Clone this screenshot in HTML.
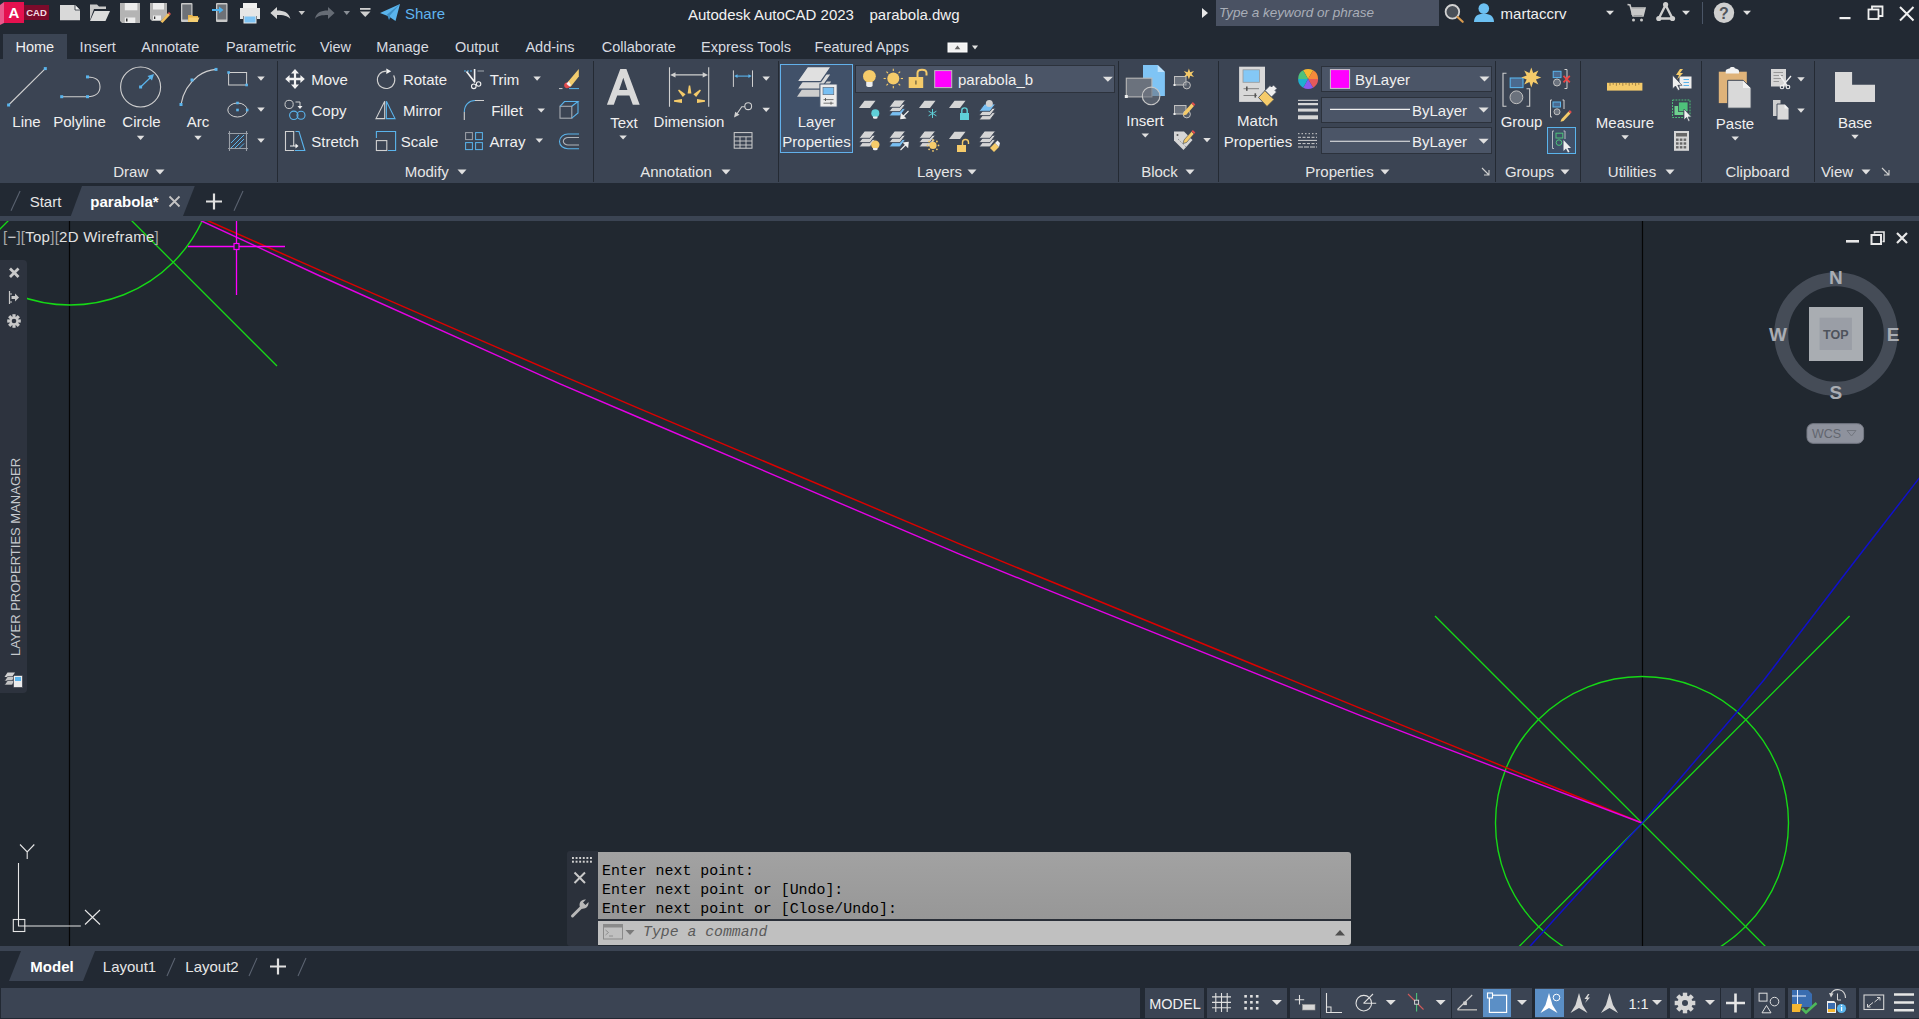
<!DOCTYPE html>
<html><head><meta charset="utf-8"><style>
html,body{margin:0;padding:0;width:1919px;height:1019px;overflow:hidden;background:#222933;}
.t{position:absolute;white-space:nowrap;line-height:20px;height:20px;font-family:"Liberation Sans",sans-serif;}
.r{position:absolute;}
svg.ov{position:absolute;left:0;top:0;}
</style></head><body>
<div class="r" style="left:0px;top:0px;width:1919px;height:34px;background:#222933;"></div>
<div class="r" style="left:0px;top:59px;width:1919px;height:124px;background:#3b4453;"></div>
<div class="r" style="left:3px;top:34px;width:64px;height:25px;background:#3b4453;"></div>
<div class="r" style="left:0px;top:183px;width:1919px;height:33px;background:#222933;"></div>
<div class="r" style="left:0px;top:216px;width:1919px;height:5px;background:#3b4453;"></div>
<div class="r" style="left:0px;top:221px;width:1919px;height:725px;background:#212830;"></div>
<div class="r" style="left:0px;top:946px;width:1919px;height:5px;background:#3b4453;"></div>
<div class="r" style="left:0px;top:951px;width:1919px;height:37px;background:#222933;"></div>
<div class="r" style="left:0px;top:988px;width:1919px;height:31px;background:#222933;"></div>
<div class="r" style="left:1px;top:988px;width:1139px;height:30px;background:#3b4453;"></div>
<div class="r" style="left:1145px;top:988px;width:59px;height:30px;background:#3b4453;"></div>
<div class="r" style="left:1207px;top:988px;width:80px;height:30px;background:#3b4453;"></div>
<div class="r" style="left:1290px;top:988px;width:30px;height:30px;background:#3b4453;"></div>
<div class="r" style="left:1321px;top:988px;width:130px;height:30px;background:#3b4453;"></div>
<div class="r" style="left:1452px;top:988px;width:80px;height:30px;background:#3b4453;"></div>
<div class="r" style="left:1535px;top:988px;width:132px;height:30px;background:#3b4453;"></div>
<div class="r" style="left:1670px;top:988px;width:50px;height:30px;background:#3b4453;"></div>
<div class="r" style="left:1721px;top:988px;width:30px;height:30px;background:#3b4453;"></div>
<div class="r" style="left:1754px;top:988px;width:31px;height:30px;background:#3b4453;"></div>
<div class="r" style="left:1788px;top:988px;width:68px;height:30px;background:#3b4453;"></div>
<div class="r" style="left:1859px;top:988px;width:60px;height:30px;background:#3b4453;"></div>
<svg class="ov" width="1919" height="1019" viewBox="0 0 1919 1019">
<polygon points="70.8,216 82,186 194.8,186 183,216" fill="#3b4453"/>
<defs><clipPath id="vpc"><rect x="0" y="221" width="1919" height="725"/></clipPath></defs>
<g clip-path="url(#vpc)">
<path d="M69.5,221 V946 M1642.5,221 V946" stroke="#050505" stroke-width="1.2"/>
<circle cx="70" cy="159" r="146" fill="none" stroke="#16d816" stroke-width="1.4"/>
<path d="M70,159 L277,366 M70,159 L-20,249" stroke="#16d816" stroke-width="1.35"/>
<circle cx="1642" cy="823" r="146.5" fill="none" stroke="#16d816" stroke-width="1.4"/>
<path d="M1435,616 L1800,981 M1849.6,616 L1484.6,981" stroke="#16d816" stroke-width="1.35"/>
<polyline points="200,217.2 208.6,221 320,270.4 560,374.7 640,408.8 960,544.1 1040,577 1360,708.2 1440,740.6 1642,823" fill="none" stroke="#dc0000" stroke-width="1.45" stroke-linejoin="round"/>
<polyline points="194,217.3 201.7,221 320,276 560,383.8 640,418 960,554.4 1040,586.8 1360,715.3 1440,746.2 1642,823" fill="none" stroke="#e600e6" stroke-width="1.4" stroke-linejoin="round"/>
<polyline points="1500,979 1530.7,945.5 1642,823 1737,712 1763.9,680 1849.6,568 1919,478.4 1930,464" fill="none" stroke="#1010cc" stroke-width="1.5" stroke-linejoin="round"/>
<path d="M188,246.5 H285 M236.5,221 V295" stroke="#ff00ff" stroke-width="1.3"/><rect x="234" y="243.5" width="5" height="6" fill="#212830" stroke="#ff00ff" stroke-width="1.2"/>
<path d="M18.5,863 V926 H80.8" fill="none" stroke="#e6e6e6" stroke-width="1.1"/><rect x="13.3" y="919.5" width="11.5" height="12" fill="none" stroke="#e6e6e6" stroke-width="1.1"/>
<path d="M20,844.5 L27.2,852 L34.3,844.5 M27.2,852 V859" fill="none" stroke="#e6e6e6" stroke-width="1.1"/><path d="M85,910 L100,924.5 M100,910 L85,924.5" stroke="#e6e6e6" stroke-width="1.1"/>
</g>
<polygon points="9,981 21,951 95,951 83,981" fill="#3b4453"/>
</svg>
<div class="t" style="left:688px;top:4.5px;width:163px;font-size:15px;color:#f2f2f2;font-weight:normal;text-align:center;font-family:'Liberation Sans', sans-serif;font-style:normal;">Autodesk AutoCAD 2023</div>
<div class="t" style="left:869px;top:4.5px;width:91px;font-size:15px;color:#f2f2f2;font-weight:normal;text-align:center;font-family:'Liberation Sans', sans-serif;font-style:normal;">parabola.dwg</div>
<div class="t" style="left:405px;top:3.5px;width:38px;font-size:15px;color:#5fb4f0;font-weight:normal;text-align:center;font-family:'Liberation Sans', sans-serif;font-style:normal;">Share</div>
<div class="r" style="left:1216px;top:0px;width:223px;height:26px;background:#4a5263;"></div>
<div class="t" style="left:1219px;top:3.0px;width:153px;font-size:13.5px;color:#a9aeb8;font-weight:normal;text-align:left;font-family:'Liberation Sans', sans-serif;font-style:italic;">Type a keyword or phrase</div>
<div class="t" style="left:1500px;top:4.0px;width:67px;font-size:15px;color:#f0f0f0;font-weight:normal;text-align:center;font-family:'Liberation Sans', sans-serif;font-style:normal;">martaccrv</div>
<div class="t" style="left:9.7px;top:36.5px;width:50.3px;font-size:14.5px;color:#f0f0f0;font-weight:normal;text-align:center;font-family:'Liberation Sans', sans-serif;font-style:normal;">Home</div>
<div class="t" style="left:75px;top:36.5px;width:45.5px;font-size:14.5px;color:#d8dbe0;font-weight:normal;text-align:center;font-family:'Liberation Sans', sans-serif;font-style:normal;">Insert</div>
<div class="t" style="left:135px;top:36.5px;width:70.5px;font-size:14.5px;color:#d8dbe0;font-weight:normal;text-align:center;font-family:'Liberation Sans', sans-serif;font-style:normal;">Annotate</div>
<div class="t" style="left:221px;top:36.5px;width:80px;font-size:14.5px;color:#d8dbe0;font-weight:normal;text-align:center;font-family:'Liberation Sans', sans-serif;font-style:normal;">Parametric</div>
<div class="t" style="left:315px;top:36.5px;width:41px;font-size:14.5px;color:#d8dbe0;font-weight:normal;text-align:center;font-family:'Liberation Sans', sans-serif;font-style:normal;">View</div>
<div class="t" style="left:371px;top:36.5px;width:63px;font-size:14.5px;color:#d8dbe0;font-weight:normal;text-align:center;font-family:'Liberation Sans', sans-serif;font-style:normal;">Manage</div>
<div class="t" style="left:449px;top:36.5px;width:55.5px;font-size:14.5px;color:#d8dbe0;font-weight:normal;text-align:center;font-family:'Liberation Sans', sans-serif;font-style:normal;">Output</div>
<div class="t" style="left:519px;top:36.5px;width:62px;font-size:14.5px;color:#d8dbe0;font-weight:normal;text-align:center;font-family:'Liberation Sans', sans-serif;font-style:normal;">Add-ins</div>
<div class="t" style="left:595px;top:36.5px;width:87.5px;font-size:14.5px;color:#d8dbe0;font-weight:normal;text-align:center;font-family:'Liberation Sans', sans-serif;font-style:normal;">Collaborate</div>
<div class="t" style="left:697.5px;top:36.5px;width:97.0px;font-size:14.5px;color:#d8dbe0;font-weight:normal;text-align:center;font-family:'Liberation Sans', sans-serif;font-style:normal;">Express Tools</div>
<div class="t" style="left:809px;top:36.5px;width:105.5px;font-size:14.5px;color:#d8dbe0;font-weight:normal;text-align:center;font-family:'Liberation Sans', sans-serif;font-style:normal;">Featured Apps</div>
<div class="t" style="left:108.8px;top:161.5px;width:43.89999999999999px;font-size:15px;color:#e6e6e6;font-weight:normal;text-align:center;font-family:'Liberation Sans', sans-serif;font-style:normal;">Draw</div>
<div class="t" style="left:398.5px;top:161.5px;width:56.5px;font-size:15px;color:#e6e6e6;font-weight:normal;text-align:center;font-family:'Liberation Sans', sans-serif;font-style:normal;">Modify</div>
<div class="t" style="left:634px;top:161.5px;width:84px;font-size:15px;color:#e6e6e6;font-weight:normal;text-align:center;font-family:'Liberation Sans', sans-serif;font-style:normal;">Annotation</div>
<div class="t" style="left:914px;top:161.5px;width:51px;font-size:15px;color:#e6e6e6;font-weight:normal;text-align:center;font-family:'Liberation Sans', sans-serif;font-style:normal;">Layers</div>
<div class="t" style="left:1136px;top:161.5px;width:47px;font-size:15px;color:#e6e6e6;font-weight:normal;text-align:center;font-family:'Liberation Sans', sans-serif;font-style:normal;">Block</div>
<div class="t" style="left:1301px;top:161.5px;width:77px;font-size:15px;color:#e6e6e6;font-weight:normal;text-align:center;font-family:'Liberation Sans', sans-serif;font-style:normal;">Properties</div>
<div class="t" style="left:1501px;top:161.5px;width:57px;font-size:15px;color:#e6e6e6;font-weight:normal;text-align:center;font-family:'Liberation Sans', sans-serif;font-style:normal;">Groups</div>
<div class="t" style="left:1602px;top:161.5px;width:60px;font-size:15px;color:#e6e6e6;font-weight:normal;text-align:center;font-family:'Liberation Sans', sans-serif;font-style:normal;">Utilities</div>
<div class="t" style="left:1720px;top:161.5px;width:75px;font-size:15px;color:#e6e6e6;font-weight:normal;text-align:center;font-family:'Liberation Sans', sans-serif;font-style:normal;">Clipboard</div>
<div class="t" style="left:1816px;top:161.5px;width:42px;font-size:15px;color:#e6e6e6;font-weight:normal;text-align:center;font-family:'Liberation Sans', sans-serif;font-style:normal;">View</div>
<div class="r" style="left:277px;top:61px;width:1px;height:121px;background:#242a33;"></div>
<div class="r" style="left:593px;top:61px;width:1px;height:121px;background:#242a33;"></div>
<div class="r" style="left:778px;top:61px;width:1px;height:121px;background:#242a33;"></div>
<div class="r" style="left:1118px;top:61px;width:1px;height:121px;background:#242a33;"></div>
<div class="r" style="left:1218px;top:61px;width:1px;height:121px;background:#242a33;"></div>
<div class="r" style="left:1495px;top:61px;width:1px;height:121px;background:#242a33;"></div>
<div class="r" style="left:1580px;top:61px;width:1px;height:121px;background:#242a33;"></div>
<div class="r" style="left:1701px;top:61px;width:1px;height:121px;background:#242a33;"></div>
<div class="r" style="left:1814px;top:61px;width:1px;height:121px;background:#242a33;"></div>
<div class="t" style="left:9px;top:111.5px;width:35px;font-size:15px;color:#f0f0f0;font-weight:normal;text-align:center;font-family:'Liberation Sans', sans-serif;font-style:normal;">Line</div>
<div class="t" style="left:50px;top:111.5px;width:59px;font-size:15px;color:#f0f0f0;font-weight:normal;text-align:center;font-family:'Liberation Sans', sans-serif;font-style:normal;">Polyline</div>
<div class="t" style="left:118px;top:112.0px;width:47px;font-size:15px;color:#f0f0f0;font-weight:normal;text-align:center;font-family:'Liberation Sans', sans-serif;font-style:normal;">Circle</div>
<div class="t" style="left:182px;top:112.0px;width:32px;font-size:15px;color:#f0f0f0;font-weight:normal;text-align:center;font-family:'Liberation Sans', sans-serif;font-style:normal;">Arc</div>
<div class="t" style="left:306px;top:69.5px;width:47px;font-size:15px;color:#f0f0f0;font-weight:normal;text-align:center;font-family:'Liberation Sans', sans-serif;font-style:normal;">Move</div>
<div class="t" style="left:307px;top:100.5px;width:44px;font-size:15px;color:#f0f0f0;font-weight:normal;text-align:center;font-family:'Liberation Sans', sans-serif;font-style:normal;">Copy</div>
<div class="t" style="left:307px;top:131.5px;width:56px;font-size:15px;color:#f0f0f0;font-weight:normal;text-align:center;font-family:'Liberation Sans', sans-serif;font-style:normal;">Stretch</div>
<div class="t" style="left:398px;top:69.5px;width:54px;font-size:15px;color:#f0f0f0;font-weight:normal;text-align:center;font-family:'Liberation Sans', sans-serif;font-style:normal;">Rotate</div>
<div class="t" style="left:397px;top:100.5px;width:51px;font-size:15px;color:#f0f0f0;font-weight:normal;text-align:center;font-family:'Liberation Sans', sans-serif;font-style:normal;">Mirror</div>
<div class="t" style="left:397px;top:131.5px;width:45px;font-size:15px;color:#f0f0f0;font-weight:normal;text-align:center;font-family:'Liberation Sans', sans-serif;font-style:normal;">Scale</div>
<div class="t" style="left:485px;top:69.5px;width:39px;font-size:15px;color:#f0f0f0;font-weight:normal;text-align:center;font-family:'Liberation Sans', sans-serif;font-style:normal;">Trim</div>
<div class="t" style="left:486px;top:100.5px;width:42px;font-size:15px;color:#f0f0f0;font-weight:normal;text-align:center;font-family:'Liberation Sans', sans-serif;font-style:normal;">Fillet</div>
<div class="t" style="left:485px;top:131.5px;width:45px;font-size:15px;color:#f0f0f0;font-weight:normal;text-align:center;font-family:'Liberation Sans', sans-serif;font-style:normal;">Array</div>
<div class="t" style="left:604px;top:112.5px;width:40px;font-size:15px;color:#f0f0f0;font-weight:normal;text-align:center;font-family:'Liberation Sans', sans-serif;font-style:normal;">Text</div>
<div class="t" style="left:649px;top:111.8px;width:80px;font-size:15px;color:#f0f0f0;font-weight:normal;text-align:center;font-family:'Liberation Sans', sans-serif;font-style:normal;">Dimension</div>
<div class="r" style="left:780px;top:64px;width:73px;height:89px;background:#415169;border:1px solid #62b0ea;box-sizing:border-box"></div>
<div class="t" style="left:794px;top:112.2px;width:45px;font-size:15px;color:#f0f0f0;font-weight:normal;text-align:center;font-family:'Liberation Sans', sans-serif;font-style:normal;">Layer</div>
<div class="t" style="left:779px;top:131.8px;width:75px;font-size:15px;color:#f0f0f0;font-weight:normal;text-align:center;font-family:'Liberation Sans', sans-serif;font-style:normal;">Properties</div>
<div class="r" style="left:855px;top:65px;width:260px;height:28px;background:#4b5567;border:1px solid #2c323c;box-sizing:border-box"></div>
<div class="t" style="left:958px;top:69.5px;width:75px;font-size:15px;color:#f0f0f0;font-weight:normal;text-align:left;font-family:'Liberation Sans', sans-serif;font-style:normal;">parabola_b</div>
<div class="t" style="left:1123px;top:111.0px;width:44px;font-size:15px;color:#f0f0f0;font-weight:normal;text-align:center;font-family:'Liberation Sans', sans-serif;font-style:normal;">Insert</div>
<div class="t" style="left:1232px;top:111.4px;width:51px;font-size:15px;color:#f0f0f0;font-weight:normal;text-align:center;font-family:'Liberation Sans', sans-serif;font-style:normal;">Match</div>
<div class="t" style="left:1220px;top:131.7px;width:76px;font-size:15px;color:#f0f0f0;font-weight:normal;text-align:center;font-family:'Liberation Sans', sans-serif;font-style:normal;">Properties</div>
<div class="r" style="left:1321px;top:65.5px;width:171px;height:26.900000000000006px;background:#4b5567;border:1px solid #2c323c;box-sizing:border-box"></div>
<div class="r" style="left:1321px;top:96.5px;width:171px;height:26.799999999999997px;background:#4b5567;border:1px solid #2c323c;box-sizing:border-box"></div>
<div class="r" style="left:1321px;top:127.4px;width:171px;height:27.099999999999994px;background:#4b5567;border:1px solid #2c323c;box-sizing:border-box"></div>
<div class="t" style="left:1355px;top:70.0px;width:65px;font-size:15px;color:#f0f0f0;font-weight:normal;text-align:left;font-family:'Liberation Sans', sans-serif;font-style:normal;">ByLayer</div>
<div class="t" style="left:1412px;top:100.7px;width:58px;font-size:15px;color:#f0f0f0;font-weight:normal;text-align:left;font-family:'Liberation Sans', sans-serif;font-style:normal;">ByLayer</div>
<div class="t" style="left:1412px;top:131.8px;width:58px;font-size:15px;color:#f0f0f0;font-weight:normal;text-align:left;font-family:'Liberation Sans', sans-serif;font-style:normal;">ByLayer</div>
<div class="t" style="left:1496px;top:111.8px;width:51px;font-size:15px;color:#f0f0f0;font-weight:normal;text-align:center;font-family:'Liberation Sans', sans-serif;font-style:normal;">Group</div>
<div class="r" style="left:1547px;top:127px;width:29px;height:27px;background:#405068;border:1px solid #5ab4ec;box-sizing:border-box"></div>
<div class="t" style="left:1592px;top:113.0px;width:66px;font-size:15px;color:#f0f0f0;font-weight:normal;text-align:center;font-family:'Liberation Sans', sans-serif;font-style:normal;">Measure</div>
<div class="t" style="left:1714px;top:113.6px;width:42px;font-size:15px;color:#f0f0f0;font-weight:normal;text-align:center;font-family:'Liberation Sans', sans-serif;font-style:normal;">Paste</div>
<div class="t" style="left:1834px;top:113.1px;width:42px;font-size:15px;color:#f0f0f0;font-weight:normal;text-align:center;font-family:'Liberation Sans', sans-serif;font-style:normal;">Base</div>
<div class="t" style="left:26px;top:191.5px;width:39px;font-size:15px;color:#e6e6e6;font-weight:normal;text-align:center;font-family:'Liberation Sans', sans-serif;font-style:normal;">Start</div>
<div class="t" style="left:88px;top:191.5px;width:73px;font-size:15px;color:#ffffff;font-weight:bold;text-align:center;font-family:'Liberation Sans', sans-serif;font-style:normal;">parabola*</div>
<div class="t" style="left:3px;top:227.0px;width:157px;font-size:15px;color:#e2e2e2;font-weight:normal;text-align:left;font-family:'Liberation Sans', sans-serif;font-style:normal;letter-spacing:0.25px"><span style="color:#a8a8a8">[</span>−<span style="color:#a8a8a8">]</span><span style="color:#a8a8a8">[</span>Top<span style="color:#a8a8a8">]</span><span style="color:#a8a8a8">[</span>2D Wireframe<span style="color:#a8a8a8">]</span></div>
<div class="r" style="left:0px;top:260px;width:27px;height:433px;background:#2d333e;border-radius:0 4px 4px 0"></div>
<div class="t" style="left:16px;top:557px;width:0;height:0;"><div style="position:absolute;left:-101px;top:-8px;width:202px;height:16px;line-height:16px;font-size:13px;color:#c6c9ce;text-align:center;transform:rotate(-90deg);font-family:'Liberation Sans',sans-serif;">LAYER PROPERTIES MANAGER</div></div>
<div class="r" style="left:567px;top:851px;width:31px;height:95px;background:#2b313b;border-radius:3px 0 0 3px"></div>
<div class="r" style="left:598px;top:852px;width:753px;height:67px;background:linear-gradient(#a2a2a2,#979797);border-radius:0 3px 0 0"></div>
<div class="r" style="left:598px;top:919px;width:753px;height:1.5px;background:#2a2f38;"></div>
<div class="r" style="left:598px;top:920.5px;width:753px;height:24.5px;background:#c0c0c0;border-radius:0 0 3px 0"></div>
<div class="t" style="left:602px;top:861.0px;width:398px;font-size:14.9px;color:#000000;font-weight:normal;text-align:left;font-family:'Liberation Mono', monospace;font-style:normal;">Enter next point:</div>
<div class="t" style="left:602px;top:880.0px;width:398px;font-size:14.9px;color:#000000;font-weight:normal;text-align:left;font-family:'Liberation Mono', monospace;font-style:normal;">Enter next point or [Undo]:</div>
<div class="t" style="left:602px;top:899.0px;width:398px;font-size:14.9px;color:#000000;font-weight:normal;text-align:left;font-family:'Liberation Mono', monospace;font-style:normal;">Enter next point or [Close/Undo]:</div>
<div class="t" style="left:643px;top:922.0px;width:137px;font-size:14.8px;color:#5a5a5a;font-weight:normal;text-align:left;font-family:'Liberation Mono', monospace;font-style:italic;">Type a command</div>
<div class="t" style="left:26px;top:956.5px;width:52px;font-size:15px;color:#ffffff;font-weight:bold;text-align:center;font-family:'Liberation Sans', sans-serif;font-style:normal;">Model</div>
<div class="t" style="left:100px;top:956.5px;width:59px;font-size:15px;color:#e6e6e6;font-weight:normal;text-align:center;font-family:'Liberation Sans', sans-serif;font-style:normal;">Layout1</div>
<div class="t" style="left:182px;top:956.5px;width:60px;font-size:15px;color:#e6e6e6;font-weight:normal;text-align:center;font-family:'Liberation Sans', sans-serif;font-style:normal;">Layout2</div>
<div class="t" style="left:1148px;top:993.5px;width:54px;font-size:14.5px;color:#f0f0f0;font-weight:normal;text-align:center;font-family:'Liberation Sans', sans-serif;font-style:normal;">MODEL</div>
<div class="r" style="left:1483px;top:988.5px;width:28px;height:28.5px;background:#5b8fc6;"></div>
<div class="r" style="left:1535px;top:988.5px;width:29px;height:28.5px;background:#5b8fc6;"></div>
<div class="t" style="left:1628px;top:993.5px;width:21px;font-size:14.5px;color:#f0f0f0;font-weight:normal;text-align:center;font-family:'Liberation Sans', sans-serif;font-style:normal;">1:1</div>
<svg class="ov" width="1919" height="1019" viewBox="0 0 1919 1019">
<g id="logo">
<polygon points="0,5 4,2 4,23 0,25" fill="#e9598c"/>
<rect x="4" y="2" width="20" height="21" fill="#e5114f"/>
<rect x="24" y="5" width="25" height="15" fill="#7b0b2b"/>
<text x="14" y="18.3" font-family="Liberation Sans" font-weight="bold" font-size="15" fill="#fff" text-anchor="middle">A</text>
<text x="36.5" y="16.2" font-family="Liberation Sans" font-weight="bold" font-size="9.5" fill="#f4dfe5" text-anchor="middle">CAD</text>
</g>
<path d="M60,5 H75 L80,10 V20.3 H60 Z" fill="#d9d9d9"/><path d="M75,5 V10 H80" fill="#f5f5f5" stroke="#222933" stroke-width="0.8"/>
<path d="M90,4.5 H97 L99,6.5 H106 V9 H94 L90,20 Z" fill="#c9c9c9"/><path d="M94.5,11 H110 L105.5,21 H90 Z" fill="#dcdcdc"/>
<path d="M120,3 H140 V23 H122 L120,21 Z" fill="#b4b4b4"/><rect x="124.8" y="3" width="12.6" height="7.3" fill="#ececec"/><rect x="124.8" y="17.5" width="10.5" height="5.5" fill="#ececec"/><rect x="126" y="18.5" width="1.5" height="3" fill="#333"/>
<path d="M150,3 H167 V15 L161,21 H152 L150,19 Z" fill="#b4b4b4"/><rect x="153" y="3" width="11" height="6.5" fill="#ececec"/><rect x="153" y="15.5" width="8" height="4.5" fill="#ececec"/><rect x="154" y="16.5" width="1.3" height="2.5" fill="#333"/><path d="M160.5,21.5 L168,13 L170,15 L162.5,23 Z" fill="#f0c060"/><path d="M168,13 L169,12 L171,14 L170,15 Z" fill="#e05050"/>
<rect x="181" y="3" width="11.5" height="19" rx="1" fill="#c8c8c8"/><rect x="182.3" y="4.5" width="9" height="15" fill="#6d7177"/><path d="M188,15 H192 L193,16 H198 V22 H188 Z" fill="#e9b54c"/><path d="M189,17.5 H199.5 L197.5,22 H188 Z" fill="#f6cf73"/>
<rect x="216" y="3" width="11.5" height="19" rx="1" fill="#c8c8c8"/><rect x="217.3" y="4.5" width="9" height="15" fill="#6d7177"/><path d="M212,9 H219 V6.5 L223.5,10 L219,13.5 V11 H212 Z" fill="#4fb0ec"/>
<rect x="243" y="3" width="14" height="5" fill="#f0f0f0"/><path d="M240,8 H260 V19 H257 V16 H243 V19 H240 Z" fill="#e6e6e6"/><rect x="244" y="16" width="12" height="7" fill="#7fc4f5" stroke="#e6e6e6" stroke-width="1"/>
<path d="M270.4,13 L277,7 V10.5 C284,10.5 289,12.5 290.4,19 C287.5,15.5 283,15 277,15 V19 Z" fill="#d5d5d5"/><path d="M298.5,11 H305 L301.75,15 Z" fill="#c8c8c8"/>
<path d="M334.6,13 L328,7 V10.5 C321,10.5 316,12.5 315,19 C317.5,15.5 322,15 328,15 V19 Z" fill="#666c75"/><path d="M343.5,11 H350 L346.75,15 Z" fill="#8a8f96"/>
<rect x="360" y="8" width="10.5" height="1.8" fill="#d0d0d0"/><path d="M360,11.5 H370.5 L365.25,17 Z" fill="#d0d0d0"/>
<path d="M380,13 L400,4 L395.5,21 L389,16.5 Z" fill="#5ab4ec"/><path d="M389,16.5 L400,4 L387,14.5 Z" fill="#3d8fc6"/><path d="M387,14.5 L389,20 L390.5,17 Z" fill="#3d8fc6"/>
<path d="M1202,8 L1208,13 L1202,18 Z" fill="#e8e8e8"/>
<circle cx="1452.4" cy="11.8" r="6.8" fill="#4a5058" stroke="#d2d2d2" stroke-width="1.8"/><path d="M1457.5,17 L1462.7,21.8" stroke="#d99a4e" stroke-width="2.2" stroke-linecap="round"/>
<circle cx="1483.8" cy="8.6" r="5.3" fill="#6cc0f2"/><path d="M1474,22 C1474,16 1478,13.8 1483.8,13.8 C1489.6,13.8 1494,16 1494,22 Z" fill="#6cc0f2"/>
<path d="M1606,10.8 H1614 L1610,15 Z" fill="#e0e0e0"/>
<path d="M1627.5,4.5 L1630,5 L1633,16 H1643 L1645,8 H1631" fill="none" stroke="#c8c8c8" stroke-width="1.6"/><rect x="1631.5" y="8.5" width="12.5" height="6.5" fill="#c8c8c8"/><circle cx="1633.5" cy="20" r="1.5" fill="#c8c8c8"/><circle cx="1641.5" cy="20" r="1.5" fill="#c8c8c8"/>
<path d="M1665.6,5 L1658.8,18.5 H1672.5 Z" fill="none" stroke="#cfcfcf" stroke-width="2.4" stroke-linejoin="round"/><circle cx="1665.6" cy="4.6" r="2.6" fill="#cfcfcf"/><circle cx="1658.8" cy="18.5" r="2.6" fill="#cfcfcf"/><circle cx="1672.5" cy="18.5" r="2.6" fill="#cfcfcf"/>
<path d="M1682,10.8 H1690 L1686,15 Z" fill="#e0e0e0"/>
<rect x="1702" y="2" width="1" height="22" fill="#4a5566"/>
<circle cx="1724" cy="12.7" r="10.2" fill="#cfcfcf"/><text x="1724" y="18.8" font-family="Liberation Sans" font-weight="bold" font-size="16" fill="#50545a" text-anchor="middle">?</text>
<path d="M1743,10.8 H1751 L1747,15 Z" fill="#e0e0e0"/>
<rect x="1839.5" y="17" width="11" height="2.2" fill="#f0f0f0"/>
<rect x="1868.5" y="9.5" width="10" height="9.5" fill="none" stroke="#f0f0f0" stroke-width="1.8"/><path d="M1872,9.5 V6.5 H1882.5 V16 H1879" fill="none" stroke="#f0f0f0" stroke-width="1.8"/>
<path d="M1900,7 L1913.5,20.5 M1913.5,7 L1900,20.5" stroke="#f0f0f0" stroke-width="2"/>
<line x1="8.6" y1="105" x2="45.3" y2="68.6" stroke="#d0d0d0" stroke-width="1.1"/>
<rect x="7.1" y="103.5" width="3" height="3" fill="#5ab4ec"/>
<rect x="43.8" y="67.1" width="3" height="3" fill="#5ab4ec"/>
<path d="M61.7,96.7 H87.5 M87.5,77 C96,77 100,81 100,86.8 C100,92.5 96,96.7 87.5,96.7" fill="none" stroke="#d0d0d0" stroke-width="1.1"/>
<rect x="60.2" y="95.2" width="3" height="3" fill="#5ab4ec"/>
<rect x="86.0" y="95.2" width="3" height="3" fill="#5ab4ec"/>
<rect x="86.0" y="75.4" width="3" height="3" fill="#5ab4ec"/>
<circle cx="140.6" cy="87" r="20" fill="none" stroke="#d0d0d0" stroke-width="1.1"/><line x1="140.6" y1="87" x2="151" y2="77" stroke="#5ab4ec" stroke-width="1.2"/><path d="M154,74 L147.5,76 L152,80.5 Z" fill="#5ab4ec"/>
<rect x="139.1" y="85.5" width="3" height="3" fill="#5ab4ec"/>
<path d="M136.85,135.70000000000002 H144.35 L140.6,139.9 Z" fill="#e0e0e0"/>
<path d="M181,104.5 C183,92 189,83 198,76 C203,72.5 209,70 216,69.4" fill="none" stroke="#d0d0d0" stroke-width="1.1"/>
<rect x="179.5" y="103.0" width="3" height="3" fill="#5ab4ec"/>
<rect x="190.5" y="78.5" width="3" height="3" fill="#5ab4ec"/>
<rect x="214.5" y="67.9" width="3" height="3" fill="#5ab4ec"/>
<path d="M194.25,135.70000000000002 H201.75 L198,139.9 Z" fill="#e0e0e0"/>
<rect x="228.6" y="72.5" width="18" height="12.5" fill="none" stroke="#d0d0d0" stroke-width="1"/>
<rect x="227.29999999999998" y="71.2" width="2.6" height="2.6" fill="#5ab4ec"/>
<rect x="245.29999999999998" y="83.7" width="2.6" height="2.6" fill="#5ab4ec"/>
<path d="M257.25,76.5 H264.75 L261,80.69999999999999 Z" fill="#e0e0e0"/>
<ellipse cx="237.5" cy="110" rx="9.7" ry="7" fill="none" stroke="#d0d0d0" stroke-width="1"/>
<rect x="236.2" y="101.7" width="2.6" height="2.6" fill="#5ab4ec"/>
<rect x="236.2" y="108.7" width="2.6" height="2.6" fill="#5ab4ec"/>
<rect x="245.89999999999998" y="108.7" width="2.6" height="2.6" fill="#5ab4ec"/>
<path d="M257.25,107.60000000000001 H264.75 L261,111.8 Z" fill="#e0e0e0"/>
<path d="M229.5,131 V151 M246.5,131 V151 M228,133.5 H248 M228,148.5 H248" stroke="#9aa0a8" stroke-width="1.1"/><path d="M231,143 L239,135 M231,148 L244,135 M235,148 L244,139 M239.5,148 L244,143.5" stroke="#5ab4ec" stroke-width="1"/>
<path d="M257.25,138.5 H264.75 L261,142.7 Z" fill="#e0e0e0"/>
<path d="M155.5,169.5 H164.5 L160,174.5 Z" fill="#e0e0e0"/>
<path d="M295,69 L299,73.5 H296.1 V77.8 H300.4 V74.9 L304.8,79 L300.4,83.1 V80.2 H296.1 V84.5 H299 L295,89 L291,84.5 H293.9 V80.2 H289.6 V83.1 L285.2,79 L289.6,74.9 V77.8 H293.9 V73.5 H291 Z" fill="#f2f2f2"/>
<circle cx="289.1" cy="104.4" r="4.1" fill="none" stroke="#d0d0d0" stroke-width="1"/><path d="M295.5,102 H300 V106" fill="none" stroke="#d0d0d0" stroke-width="1"/><path d="M297.5,106 H302.5 L300,109 Z" fill="#f2f2f2"/><circle cx="293.8" cy="115.3" r="4.2" fill="none" stroke="#5ab4ec" stroke-width="1.1"/><circle cx="301" cy="115.3" r="4" fill="none" stroke="#5ab4ec" stroke-width="1.1"/>
<path d="M294.2,150.5 H285.5 V131.5 H293.7 V146" fill="none" stroke="#d0d0d0" stroke-width="1.1"/><path d="M290,146 H296" stroke="#f2f2f2" stroke-width="1"/><path d="M295.5,143.5 L298.5,146 L295.5,148.5 Z" fill="#f2f2f2"/><path d="M295.5,131.5 H299 L304.8,150.5 H295" fill="none" stroke="#5ab4ec" stroke-width="1.1"/>
<path d="M386.1,71.1 A8.7,8.7 0 1 0 393.6,75.4" fill="none" stroke="#d0d0d0" stroke-width="1.1"/><path d="M386.3,68.6 L391.2,71.3 L386.3,74 Z" fill="#f2f2f2"/>
<path d="M384.7,101.2 V118.6 H376 Z" fill="none" stroke="#d0d0d0" stroke-width="1.1"/><path d="M386.4,101.2 V118.6 H395 Z" fill="none" stroke="#5ab4ec" stroke-width="1.1"/>
<path d="M376.4,138 V131.5 H395.6 V150.5 H388" fill="none" stroke="#5ab4ec" stroke-width="1.1"/><rect x="376.4" y="140.6" width="10.4" height="9.9" fill="none" stroke="#d0d0d0" stroke-width="1.1"/>
<path d="M464,71 H473" stroke="#5ab4ec" stroke-width="1.1" stroke-dasharray="2,1"/><path d="M477.5,71 H484" stroke="#9aa0a8" stroke-width="1.1"/><path d="M466.5,71.5 L475,82.5 M474.6,69 V82" stroke="#f2f2f2" stroke-width="1.6"/><circle cx="473.8" cy="86.3" r="2.3" fill="none" stroke="#f2f2f2" stroke-width="1.1"/><circle cx="478.6" cy="84" r="2.2" fill="none" stroke="#f2f2f2" stroke-width="1.1"/>
<path d="M533.35,76.5 H540.85 L537.1,80.69999999999999 Z" fill="#e0e0e0"/>
<path d="M464.3,112 C464.3,105 469,100.5 475,100.5" fill="none" stroke="#5ab4ec" stroke-width="1.1"/><path d="M464.3,112 V120 M475,100.5 H484" stroke="#d0d0d0" stroke-width="1.1"/>
<path d="M537.45,108.4 H544.95 L541.2,112.6 Z" fill="#e0e0e0"/>
<rect x="465.6" y="132.6" width="6.8" height="7" fill="none" stroke="#a0a4aa" stroke-width="1"/><rect x="475.6" y="132.6" width="6.8" height="7" fill="none" stroke="#5ab4ec" stroke-width="1"/><rect x="465.6" y="142.6" width="6.8" height="7" fill="none" stroke="#5ab4ec" stroke-width="1"/><rect x="475.6" y="142.6" width="6.8" height="7" fill="none" stroke="#5ab4ec" stroke-width="1"/>
<path d="M535.55,138.5 H543.05 L539.3,142.7 Z" fill="#e0e0e0"/>
<path d="M566.5,83.5 L578.8,69 V76.5 L570.5,87 Z" fill="#f2cc6e"/><path d="M565,83 C563.5,85 564,87.3 566,88 C567.5,88.6 569,88 570.5,86.6 L567.8,82 Z" fill="#e34b4b"/><path d="M566.3,83.7 L568.8,81.5 L571,85 L569.5,86.6 Z" fill="#f5f5f5"/><path d="M559,88.6 H562.5" stroke="#d0d0d0" stroke-width="1"/><path d="M569,88.6 H579" stroke="#5ab4ec" stroke-width="1"/>
<rect x="560" y="106.3" width="11.8" height="11.9" fill="none" stroke="#a8acb2" stroke-width="1.1"/><path d="M560,106.3 L564.5,101.5 H578 L571.8,106.3 M578,101.5 V113 L571.8,118.2" fill="none" stroke="#5ab4ec" stroke-width="1.1"/>
<path d="M579,134 H568 C563.5,134 559.5,137 559.5,141.5 C559.5,146 563.5,148.7 568,148.7 H579" fill="none" stroke="#5ab4ec" stroke-width="1.1"/><path d="M579,137.5 H568 C566,137.5 563.3,139 563.3,141.3 C563.3,143.6 566,145 568,145 H579" fill="none" stroke="#b0b4ba" stroke-width="1.1"/>
<path d="M457.5,169.5 H466.5 L462,174.5 Z" fill="#e0e0e0"/>
<path d="M606.9,104.7 L620.3,69 H626.4 L639.7,104.7 H632.8 L629.4,95.5 H617.2 L613.8,104.7 Z M619.2,90 H627.4 L623.3,77.8 Z" fill="#d9d9d9" fill-rule="evenodd"/>
<path d="M619.35,135.4 H626.85 L623.1,139.6 Z" fill="#e0e0e0"/>
<path d="M669.5,67.2 V106.8 M708.7,67.2 V106.8 M674,74.9 H704" stroke="#d0d0d0" stroke-width="1.1"/><path d="M670.2,74.9 L675.5,72.3 V77.5 Z M708,74.9 L702.7,72.3 V77.5 Z" fill="#d0d0d0"/>
<g fill="#f5cb6a"><path d="M690.20,85.50 L688.80,85.50 L687.60,93.50 L691.40,93.50 Z"/><path d="M679.03,89.54 L678.04,90.53 L682.85,97.04 L685.54,94.35 Z"/><path d="M700.96,90.53 L699.97,89.54 L693.46,94.35 L696.15,97.04 Z"/><path d="M674.00,100.30 L674.00,101.70 L682.00,102.90 L682.00,99.10 Z"/><path d="M705.00,101.70 L705.00,100.30 L697.00,99.10 L697.00,102.90 Z"/></g>
<path d="M733.4,70.4 V86.9 M752.5,70.4 V86.9" stroke="#d0d0d0" stroke-width="1"/><path d="M736,76.1 H750" stroke="#5ab4ec" stroke-width="1.1"/><path d="M734.2,76.1 L737.5,74.2 V78 Z M751.7,76.1 L748.4,74.2 V78 Z" fill="#5ab4ec"/>
<path d="M762.45,76.60000000000001 H769.95 L766.2,80.8 Z" fill="#e0e0e0"/>
<circle cx="748.2" cy="106.2" r="3.4" fill="none" stroke="#d0d0d0" stroke-width="1.1"/><path d="M744.8,106.8 H741.8 L736.5,114.5" fill="none" stroke="#d0d0d0" stroke-width="1.1"/><path d="M734,117.5 L735.2,111.8 L739.5,114.8 Z" fill="#d0d0d0"/>
<path d="M762.45,107.7 H769.95 L766.2,111.89999999999999 Z" fill="#e0e0e0"/>
<rect x="734.2" y="132.6" width="17.8" height="15.6" fill="none" stroke="#d0d0d0" stroke-width="1"/><path d="M734.2,136.8 H752 M734.2,141 H752 M734.2,145 H752 M740,136.8 V148.2 M746,136.8 V148.2" stroke="#d0d0d0" stroke-width="0.9"/>
<path d="M721.5,169.5 H730.5 L726,174.5 Z" fill="#e0e0e0"/>
<path d="M807.5,81.5 H831.2 L820.8,96.7 H797 Z" fill="#cdcdcd"/><path d="M807.5,74 H831.2 L820.8,89.2 H797 Z" fill="#d9d9d9" stroke="#415169" stroke-width="1.2"/><path d="M807.5,66.6 H831.2 L820.8,81.7 H797 Z" fill="#e0e0e0" stroke="#415169" stroke-width="1.2"/>
<rect x="819.9" y="84" width="17.3" height="23.1" fill="#ececec" stroke="#415169" stroke-width="1"/><rect x="823" y="87.3" width="10.8" height="7.4" fill="#78bff2" stroke="#5a6270" stroke-width="0.6"/><path d="M823.5,99.6 H833.5 M823.5,103.2 H833.5" stroke="#555" stroke-width="0.8"/><path d="M825.5,98 V101 M831,101.7 V104.7" stroke="#555" stroke-width="0.9"/>
<circle cx="869.4" cy="76.3" r="6.4" fill="#f5cb6a"/><path d="M866.2,82 H872.6 V85.5 C872.6,87.5 866.2,87.5 866.2,85.5 Z" fill="#ededed"/>
<circle cx="893.3" cy="78.5" r="6" fill="#f5cb6a"/><g stroke="#f5cb6a" stroke-width="1.1"><line x1="900.80" y1="78.50" x2="903.00" y2="78.50"/><line x1="898.60" y1="83.80" x2="900.16" y2="85.36"/><line x1="893.30" y1="86.00" x2="893.30" y2="88.20"/><line x1="888.00" y1="83.80" x2="886.44" y2="85.36"/><line x1="885.80" y1="78.50" x2="883.60" y2="78.50"/><line x1="888.00" y1="73.20" x2="886.44" y2="71.64"/><line x1="893.30" y1="71.00" x2="893.30" y2="68.80"/><line x1="898.60" y1="73.20" x2="900.16" y2="71.64"/></g>
<rect x="908.7" y="77" width="14.5" height="11" fill="#f5cb6a"/><path d="M917.5,77 V73 C917.5,68.5 926.5,68.5 926.5,73 V75.5" fill="none" stroke="#f5cb6a" stroke-width="2"/><rect x="915.2" y="80.5" width="1.4" height="4" fill="#7a6a40"/>
<rect x="934.7" y="70.6" width="17" height="17" fill="#ff00ff" stroke="#c0c0c0" stroke-width="1"/>
<path d="M1102.9,76.8 H1112.9 L1107.9,81.8 Z" fill="#e0e0e0"/>
<path d="M864.5,100.7 H875.5 L870.0,108.0 H859 Z" fill="#d6d6d6"/><circle cx="875.3" cy="113.3" r="4" fill="#5fd0d8"/><path d="M873,116.5 H877.5 V118 C877.5,119 873,119 873,118 Z" fill="#eee"/>
<path d="M894.5,108.6 H905.5 L900,115.89999999999999 H889 Z" fill="#78bff2" stroke="#3b4453" stroke-width="0.9"/><path d="M894.5,104.3 H905.5 L900,111.6 H889 Z" fill="#d6d6d6" stroke="#3b4453" stroke-width="0.9"/><path d="M894.5,100.0 H905.5 L900,107.3 H889 Z" fill="#d6d6d6" stroke="#3b4453" stroke-width="0.9"/><path d="M908.5,111 L901.5,118 M900.8,118.6 L901.3,114 L905.3,118 Z" stroke="#eee" stroke-width="1.1" fill="#eee"/>
<path d="M924.5,100.7 H935.5 L930.0,108.0 H919 Z" fill="#d6d6d6"/><g stroke="#5fd0d8" stroke-width="1"><path d="M932.5,109 V118 M928.6,111.2 L936.4,115.8 M928.6,115.8 L936.4,111.2"/></g>
<path d="M954.5,100.7 H965.5 L960.0,108.0 H949 Z" fill="#d6d6d6"/><rect x="960" y="113" width="9" height="7" fill="#5fd0d8"/><path d="M961.8,113 V110.5 C961.8,107 967.2,107 967.2,110.5 V113" fill="none" stroke="#5fd0d8" stroke-width="1.4"/>
<path d="M984.5,112.6 H995.5 L990,119.89999999999999 H979 Z" fill="#d6d6d6" stroke="#3b4453" stroke-width="0.9"/><path d="M984.5,108.3 H995.5 L990,115.6 H979 Z" fill="#d6d6d6" stroke="#3b4453" stroke-width="0.9"/><path d="M984.5,104.0 H995.5 L990,111.3 H979 Z" fill="#78bff2" stroke="#3b4453" stroke-width="0.9"/><circle cx="989.3" cy="103.5" r="3.5" fill="#d0d0d0"/>
<path d="M864.5,139.6 H875.5 L870,146.9 H859 Z" fill="#d6d6d6" stroke="#3b4453" stroke-width="0.9"/><path d="M864.5,135.3 H875.5 L870,142.60000000000002 H859 Z" fill="#d6d6d6" stroke="#3b4453" stroke-width="0.9"/><path d="M864.5,131.0 H875.5 L870,138.3 H859 Z" fill="#d6d6d6" stroke="#3b4453" stroke-width="0.9"/><circle cx="875.3" cy="144.8" r="4.2" fill="#f5cb6a"/><path d="M873,148 H877.5 V149.5 C877.5,150.5 873,150.5 873,149.5 Z" fill="#eee"/>
<path d="M894.5,139.6 H905.5 L900,146.9 H889 Z" fill="#78bff2" stroke="#3b4453" stroke-width="0.9"/><path d="M894.5,135.3 H905.5 L900,142.60000000000002 H889 Z" fill="#d6d6d6" stroke="#3b4453" stroke-width="0.9"/><path d="M894.5,131.0 H905.5 L900,138.3 H889 Z" fill="#d6d6d6" stroke="#3b4453" stroke-width="0.9"/><path d="M900.5,150 L907.5,143 M908.2,142.3 L907.7,147 L903.7,143 Z" stroke="#eee" stroke-width="1.1" fill="#eee"/>
<path d="M924.5,139.6 H935.5 L930,146.9 H919 Z" fill="#d6d6d6" stroke="#3b4453" stroke-width="0.9"/><path d="M924.5,135.3 H935.5 L930,142.60000000000002 H919 Z" fill="#d6d6d6" stroke="#3b4453" stroke-width="0.9"/><path d="M924.5,131.0 H935.5 L930,138.3 H919 Z" fill="#d6d6d6" stroke="#3b4453" stroke-width="0.9"/><circle cx="933" cy="145.4" r="3.6" fill="#f5cb6a"/><g fill="#f5cb6a"><circle cx="938.50" cy="145.40" r="0.9"/><circle cx="936.89" cy="149.29" r="0.9"/><circle cx="933.00" cy="150.90" r="0.9"/><circle cx="929.11" cy="149.29" r="0.9"/><circle cx="927.50" cy="145.40" r="0.9"/><circle cx="929.11" cy="141.51" r="0.9"/><circle cx="933.00" cy="139.90" r="0.9"/><circle cx="936.89" cy="141.51" r="0.9"/></g>
<path d="M954.5,131.7 H965.5 L960.0,139.0 H949 Z" fill="#d6d6d6"/><rect x="957" y="145" width="9" height="7" fill="#f5cb6a"/><path d="M962.5,145 V142.5 C962.5,138.5 968.5,138.5 968.5,142.5 V144" fill="none" stroke="#f5cb6a" stroke-width="1.4"/>
<path d="M984.5,139.6 H995.5 L990,146.9 H979 Z" fill="#d6d6d6" stroke="#3b4453" stroke-width="0.9"/><path d="M984.5,135.3 H995.5 L990,142.60000000000002 H979 Z" fill="#d6d6d6" stroke="#3b4453" stroke-width="0.9"/><path d="M984.5,131.0 H995.5 L990,138.3 H979 Z" fill="#d6d6d6" stroke="#3b4453" stroke-width="0.9"/><path d="M990,148 L995,143 L999,147 L994,152 Z" fill="#f5cb6a"/><path d="M995,143 L997.5,140.5 L1000,143 L999,147 Z" fill="#eee"/>
<path d="M967.5,169.5 H976.5 L972,174.5 Z" fill="#e0e0e0"/>
<path d="M1143,64.9 H1157.7 L1164.9,72 V95.9 H1143 Z" fill="#7fc4f5"/><path d="M1157.7,64.9 V72 H1164.9 Z" fill="#bfe2fb"/>
<rect x="1126.3" y="78.2" width="25.6" height="18.7" fill="#6b727d" stroke="#b8b8b8" stroke-width="1.1"/><circle cx="1151.1" cy="95.9" r="8.8" fill="#6b727d" fill-opacity="0.6" stroke="#c8c8c8" stroke-width="1.1"/><rect x="1124.8" y="95" width="3" height="3" fill="#eee"/>
<path d="M1141.55,133.4 H1149.05 L1145.3,137.6 Z" fill="#e0e0e0"/>
<rect x="1174.5" y="76.5" width="11.5" height="8.5" fill="#6b727d" stroke="#c0c0c0" stroke-width="1"/><circle cx="1186.8" cy="85.3" r="3.6" fill="#6b727d" fill-opacity="0.5" stroke="#c0c0c0" stroke-width="1"/><rect x="1173.5" y="84.0" width="2" height="2" fill="#eee"/><path d="M1188.9,68.5 L1190.2,72.2 L1194,71 L1191.6,74 L1194,77 L1190.2,75.8 L1188.9,79.5 L1187.6,75.8 L1183.8,77 L1186.2,74 L1183.8,71 L1187.6,72.2 Z" fill="#f5cb6a"/>
<rect x="1174.5" y="105.5" width="11.5" height="8.5" fill="#6b727d" stroke="#c0c0c0" stroke-width="1"/><circle cx="1186.8" cy="114.3" r="3.6" fill="#6b727d" fill-opacity="0.5" stroke="#c0c0c0" stroke-width="1"/><rect x="1173.5" y="113.0" width="2" height="2" fill="#eee"/><path d="M1184,112 L1191.5,103.5 L1194,106 L1186.5,114.5 L1183,115.5 Z" fill="#f5cb6a"/><path d="M1191.5,103.5 L1192.8,102 L1195.3,104.5 L1194,106 Z" fill="#e34b4b"/>
<path d="M1174,131.5 H1184 L1192.5,140 L1183.5,150 L1174,140.5 Z" fill="#d6d6d6"/><circle cx="1177.5" cy="135" r="1" fill="#555"/><path d="M1178,139 L1186,147" stroke="#888" stroke-width="0.8" stroke-dasharray="1.5,1"/><path d="M1184,140 L1191.5,131.5 L1194,134 L1186.5,142.5 L1183,143.5 Z" fill="#f5cb6a" stroke="#3b4453" stroke-width="0.6"/><path d="M1191.5,131.5 L1192.8,130 L1195.3,132.5 L1194,134 Z" fill="#e34b4b"/>
<path d="M1203.25,138.0 H1210.75 L1207,142.2 Z" fill="#e0e0e0"/>
<path d="M1185.5,169.5 H1194.5 L1190,174.5 Z" fill="#e0e0e0"/>
<rect x="1239.1" y="66.7" width="25.9" height="35.2" fill="#d9d9d9"/><rect x="1243" y="69.8" width="16.6" height="12.5" fill="#84c8f6" stroke="#9a9a9a" stroke-width="0.8"/><path d="M1243.5,88.7 H1259 M1243.5,95.5 H1257" stroke="#777" stroke-width="0.9"/><rect x="1246" y="86.5" width="1.6" height="4.3" fill="#555"/><rect x="1254.5" y="93.3" width="1.6" height="4.3" fill="#555"/>
<path d="M1258.5,97.5 L1265,90.5 L1274,99.5 L1267,106.5 Z" fill="#f5cb6a" stroke="#3b4453" stroke-width="0.8"/><path d="M1265,90.5 L1270,85.5 L1271.5,87 L1273.5,85 L1277,88.5 L1275,90.5 L1276.5,92 L1271.5,97 Z" fill="#eeeeee" stroke="#3b4453" stroke-width="0.8"/>
<path d="M1308.1,79 L1303.10,70.34 A10,10 0 0 1 1313.10,70.34 Z" fill="#f5b731"/>
<path d="M1308.1,79 L1313.10,70.34 A10,10 0 0 1 1318.10,79.00 Z" fill="#f58a3a"/>
<path d="M1308.1,79 L1318.10,79.00 A10,10 0 0 1 1313.10,87.66 Z" fill="#e55a5a"/>
<path d="M1308.1,79 L1313.10,87.66 A10,10 0 0 1 1303.10,87.66 Z" fill="#8a5af0"/>
<path d="M1308.1,79 L1303.10,87.66 A10,10 0 0 1 1298.10,79.00 Z" fill="#1fb0d0"/>
<path d="M1308.1,79 L1298.10,79.00 A10,10 0 0 1 1303.10,70.34 Z" fill="#4ec27a"/>
<rect x="1298" y="99.8" width="20" height="1.1" fill="#d6d6d6"/><rect x="1298" y="103" width="20" height="2.2" fill="#d6d6d6"/><rect x="1298" y="108.6" width="20" height="3" fill="#d6d6d6"/><rect x="1298" y="115.3" width="20" height="4" fill="#d6d6d6"/>
<g stroke="#d0d0d0" stroke-width="1"><path d="M1298,133.7 H1317" stroke-dasharray="1.5,2"/><path d="M1298,137.3 H1317" stroke-dasharray="3,1.5"/><path d="M1298,140.4 H1317"/><path d="M1298,143.6 H1317" stroke-dasharray="3,1.5"/><path d="M1298,147 H1317" stroke-dasharray="5,1"/></g>
<rect x="1330.4" y="69.6" width="19.2" height="18.8" fill="#ff00ff" stroke="#c8c8c8" stroke-width="1"/>
<path d="M1330,109.4 H1410 M1330,141.3 H1410" stroke="#eeeeee" stroke-width="1.1"/>
<path d="M1479.5,76.5 H1489.5 L1484.5,81.5 Z" fill="#e0e0e0"/>
<path d="M1478.6,107.6 H1488.6 L1483.6,112.6 Z" fill="#e0e0e0"/>
<path d="M1478.6,138.8 H1488.6 L1483.6,143.8 Z" fill="#e0e0e0"/>
<path d="M1380.5,169.5 H1389.5 L1385,174.5 Z" fill="#e0e0e0"/>
<path d="M1482,168 L1489,175 M1489,170 V175 H1484" fill="none" stroke="#d0d0d0" stroke-width="1.1"/>
<path d="M1506.5,73.2 H1503 V106.3 H1506.5 M1526.5,88.7 H1529.7 V106.3 H1526.5" fill="none" stroke="#d0d0d0" stroke-width="1.1"/>
<rect x="1510.2" y="78" width="12.8" height="9.6" fill="#4b6a8f" stroke="#5ab4ec" stroke-width="1.1"/><circle cx="1516.4" cy="97.3" r="6.4" fill="#6b727d" stroke="#c0c0c0" stroke-width="1"/>
<path d="M1531.30,67.50 L1533.21,72.88 L1538.37,70.43 L1535.92,75.59 L1541.30,77.50 L1535.92,79.41 L1538.37,84.57 L1533.21,82.12 L1531.30,87.50 L1529.39,82.12 L1524.23,84.57 L1526.68,79.41 L1521.30,77.50 L1526.68,75.59 L1524.23,70.43 L1529.39,72.88 Z" fill="#f5cb6a"/>
<rect x="1553.2" y="71.3" width="7.8" height="6.3" fill="#4b6a8f" stroke="#5ab4ec" stroke-width="1"/><circle cx="1557" cy="82.5" r="3.5" fill="#6b727d" stroke="#c0c0c0" stroke-width="1"/><path d="M1564.5,69.5 H1567 V88.5 H1564.5" fill="none" stroke="#d0d0d0" stroke-width="1"/><path d="M1563.5,75.8 L1569.8,82.3 M1569.8,75.8 L1563.5,82.3" stroke="#ee4444" stroke-width="1.8"/>
<path d="M1552,100 H1550.5 V117 H1552 M1562.5,100 H1564 V109" fill="none" stroke="#d0d0d0" stroke-width="1"/><rect x="1553" y="102" width="7.5" height="5" fill="#4b6a8f" stroke="#5ab4ec" stroke-width="1"/><circle cx="1557" cy="111.8" r="3" fill="#6b727d" stroke="#c0c0c0" stroke-width="1"/><path d="M1561.5,119 L1568.5,111.5 L1570.5,113.5 L1563.5,121 L1560.5,121.8 Z" fill="#f5cb6a"/><path d="M1568.5,111.5 L1569.8,110 L1571.8,112 L1570.5,113.5 Z" fill="#e34b4b"/>
<path d="M1554,131 H1552.5 V148.5 H1554 M1563.5,131 H1565 V139" fill="none" stroke="#b8bcc2" stroke-width="1"/><rect x="1556" y="133.2" width="6.8" height="4.8" fill="none" stroke="#4ec27a" stroke-width="1"/><circle cx="1559" cy="142.6" r="2.8" fill="none" stroke="#4ec27a" stroke-width="1"/><path d="M1563.5,140 V151 L1566,148.5 L1568,152.5 L1569.5,151.8 L1567.5,148 H1571 Z" fill="#eee"/>
<path d="M1560.5,169.5 H1569.5 L1565,174.5 Z" fill="#e0e0e0"/>
<rect x="1607" y="82.8" width="35.4" height="7.8" fill="#f5cb6a"/><path d="M1610.0,82.8 V85.8 M1613.2,82.8 V84.8 M1616.4,82.8 V85.8 M1619.6,82.8 V84.8 M1622.8,82.8 V85.8 M1626.0,82.8 V84.8 M1629.2,82.8 V85.8 M1632.4,82.8 V84.8 M1635.6,82.8 V85.8 M1638.8,82.8 V84.8" stroke="#8a7040" stroke-width="0.8"/>
<path d="M1621.35,135.20000000000002 H1628.85 L1625.1,139.4 Z" fill="#e0e0e0"/>
<rect x="1679.5" y="76.5" width="12" height="12" fill="#eeeeee"/><path d="M1683.5,79.5 H1689 M1683.5,82.5 H1689 M1683.5,85.5 H1689" stroke="#5ab4ec" stroke-width="1"/><path d="M1672.5,75 V89 L1675.5,86 L1678,90.5 L1680,89.5 L1677.8,85.3 H1682 Z" fill="#f0f0f0" stroke="#3b4453" stroke-width="0.7"/><path d="M1680,69 L1676,75 H1679 L1677,79.5 L1683,73 H1680 L1683,69 Z" fill="#f5cb6a"/>
<rect x="1672.5" y="100" width="17.5" height="17.5" fill="none" stroke="#4ec27a" stroke-width="1" stroke-dasharray="1.8,1.2"/><rect x="1674.5" y="106" width="9" height="9" fill="#6fd08f"/><rect x="1678.5" y="102" width="9.5" height="9.5" fill="#4ec27a" stroke="#3b4453" stroke-width="0.8"/><path d="M1684,109 V120 L1686.5,117.5 L1688.5,121.5 L1690,120.8 L1688,117 H1691.5 Z" fill="#f0f0f0" stroke="#3b4453" stroke-width="0.7"/>
<rect x="1674" y="131" width="15" height="19.8" fill="#d6d6d6"/><rect x="1676" y="133" width="11" height="3.5" fill="#666"/><rect x="1676.0" y="138.5" width="2.6" height="2.4" fill="#666"/><rect x="1679.8" y="138.5" width="2.6" height="2.4" fill="#666"/><rect x="1683.6" y="138.5" width="2.6" height="2.4" fill="#666"/><rect x="1676.0" y="142.3" width="2.6" height="2.4" fill="#666"/><rect x="1679.8" y="142.3" width="2.6" height="2.4" fill="#666"/><rect x="1683.6" y="142.3" width="2.6" height="2.4" fill="#666"/><rect x="1676.0" y="146.1" width="2.6" height="2.4" fill="#666"/><rect x="1679.8" y="146.1" width="2.6" height="2.4" fill="#666"/><rect x="1683.6" y="146.1" width="2.6" height="2.4" fill="#666"/>
<path d="M1665.5,169.5 H1674.5 L1670,174.5 Z" fill="#e0e0e0"/>
<rect x="1718.8" y="71.7" width="28" height="31.4" fill="#dfb37a"/><path d="M1725.7,73.6 H1739 V71 C1739,69 1736.5,68.6 1735,68.4 C1734.5,66.5 1730.2,66.5 1729.7,68.4 C1728.2,68.6 1725.7,69 1725.7,71 Z" fill="#f2f2f2"/>
<path d="M1727.7,80.3 H1743 L1751.1,88 V108.2 H1727.7 Z" fill="#d9d9d9" stroke="#3b4453" stroke-width="1"/><path d="M1743,80.8 V88 H1750.6 Z" fill="#f2f2f2"/>
<path d="M1731.45,136.4 H1738.95 L1735.2,140.6 Z" fill="#e0e0e0"/>
<rect x="1771" y="69" width="15" height="17.5" fill="#d6d6d6"/><path d="M1773.5,72.5 H1783 M1773.5,75.5 H1783 M1773.5,78.5 H1781 M1773.5,81.5 H1779" stroke="#888" stroke-width="0.8"/><path d="M1779.5,75 L1787,85.5 M1791,76 L1783,85.5" stroke="#f0f0f0" stroke-width="1.3"/><circle cx="1782" cy="87" r="1.8" fill="none" stroke="#f0f0f0" stroke-width="1.1"/><circle cx="1788" cy="87" r="1.8" fill="none" stroke="#f0f0f0" stroke-width="1.1"/>
<path d="M1797.25,77.30000000000001 H1804.75 L1801,81.5 Z" fill="#e0e0e0"/>
<path d="M1773,100 H1780.5 V116 H1773 Z" fill="#cfcfcf"/><path d="M1777,104 H1784.5 L1789,108.5 V120 H1777 Z" fill="#d9d9d9" stroke="#3b4453" stroke-width="0.9"/><path d="M1784.5,104.3 V108.5 H1788.7 Z" fill="#f2f2f2"/>
<path d="M1797.25,108.5 H1804.75 L1801,112.69999999999999 Z" fill="#e0e0e0"/>
<path d="M1835,72 H1852.1 V84.8 H1875 V102 H1835 Z" fill="#d9d9d9"/>
<path d="M1851.25,134.70000000000002 H1858.75 L1855,138.9 Z" fill="#e0e0e0"/>
<path d="M1861.5,169.5 H1870.5 L1866,174.5 Z" fill="#e0e0e0"/>
<path d="M1882,168 L1889,175 M1889,170 V175 H1884" fill="none" stroke="#d0d0d0" stroke-width="1.1"/>
<path d="M20.1,191 L11,210.8" stroke="#5a6270" stroke-width="1.1"/><path d="M243,191 L234,210.8" stroke="#5a6270" stroke-width="1.1"/>
<path d="M169.5,196.5 L179.5,206.5 M179.5,196.5 L169.5,206.5" stroke="#c4c4c4" stroke-width="1.8"/>
<path d="M214,193.5 V209.5 M206,201.5 H222" stroke="#e0e0e0" stroke-width="2.2"/>
<path d="M10,268.5 L18.5,277 M18.5,268.5 L10,277" stroke="#c8c8c8" stroke-width="2.8"/>
<path d="M9.5,291 V304 M9.5,294 H12 M9.5,302 H12" fill="none" stroke="#c8c8c8" stroke-width="1.2"/><path d="M11.5,296 H15 V293.5 L19,297.5 L15,301.5 V299 H11.5 Z" fill="#c8c8c8"/>
<g transform="translate(14,321)" fill="#c8c8c8"><circle r="4.3"/><rect x="-1.6" y="-6.8" width="3.2" height="3.8" transform="rotate(0)"/><rect x="-1.6" y="-6.8" width="3.2" height="3.8" transform="rotate(45)"/><rect x="-1.6" y="-6.8" width="3.2" height="3.8" transform="rotate(90)"/><rect x="-1.6" y="-6.8" width="3.2" height="3.8" transform="rotate(135)"/><rect x="-1.6" y="-6.8" width="3.2" height="3.8" transform="rotate(180)"/><rect x="-1.6" y="-6.8" width="3.2" height="3.8" transform="rotate(225)"/><rect x="-1.6" y="-6.8" width="3.2" height="3.8" transform="rotate(270)"/><rect x="-1.6" y="-6.8" width="3.2" height="3.8" transform="rotate(315)"/></g><circle cx="14" cy="321" r="2.3" fill="#2d333e"/>
<path d="M7.5,672.5 H15 L12,677 H4.5 Z" fill="#d0d0d0"/><path d="M7.5,676.5 H15 L12,681 H4.5 Z" fill="#c4c4c4" stroke="#2d333e" stroke-width="0.6"/><path d="M7.5,680.5 H15 L12,685 H4.5 Z" fill="#c4c4c4" stroke="#2d333e" stroke-width="0.6"/><rect x="13.5" y="675.5" width="9" height="12" fill="#ececec" stroke="#2d333e" stroke-width="0.6"/><rect x="15" y="677" width="6" height="4" fill="#5ab4ec"/>
<rect x="1846" y="240" width="13" height="2.6" fill="#e8e8e8"/><rect x="1871.5" y="235" width="9.5" height="9" fill="none" stroke="#e8e8e8" stroke-width="2"/><path d="M1874.5,233.5 V232 H1884 V241.5 H1882.5" fill="none" stroke="#e8e8e8" stroke-width="1.6"/><path d="M1897,233 L1907,243 M1907,233 L1897,243" stroke="#e8e8e8" stroke-width="2.2"/>
<circle cx="1836" cy="334" r="54.8" fill="none" stroke="#454c57" stroke-width="14"/>
<rect x="1809" y="307" width="54" height="54" fill="#a9adb2"/><rect x="1819.6" y="317.7" width="32.3" height="32.3" fill="#9a9ea6"/>
<text x="1835.8" y="339" font-family="Liberation Sans" font-weight="bold" font-size="12.5" fill="#4e535c" text-anchor="middle">TOP</text>
<g font-family="Liberation Sans" font-weight="bold" font-size="19" fill="#a9adb3" text-anchor="middle"><text x="1835.8" y="284">N</text><text x="1835.8" y="399">S</text><text x="1778" y="341">W</text><text x="1893" y="341">E</text></g>
<rect x="1807" y="423.7" width="56.6" height="19.6" rx="6" fill="#8e929d" stroke="#767a85" stroke-width="1"/><text x="1826.5" y="438" font-family="Liberation Sans" font-size="12.5" fill="#62666f" text-anchor="middle">WCS</text><path d="M1847,430.5 H1856 L1851.5,436 Z" fill="none" stroke="#72767f" stroke-width="1"/>
<g fill="#d0d0d0"><rect x="572.0" y="857.0" width="1.9" height="2" /><rect x="572.0" y="860.7" width="1.9" height="2" /><rect x="575.6" y="857.0" width="1.9" height="2" /><rect x="575.6" y="860.7" width="1.9" height="2" /><rect x="579.2" y="857.0" width="1.9" height="2" /><rect x="579.2" y="860.7" width="1.9" height="2" /><rect x="582.8" y="857.0" width="1.9" height="2" /><rect x="582.8" y="860.7" width="1.9" height="2" /><rect x="586.4" y="857.0" width="1.9" height="2" /><rect x="586.4" y="860.7" width="1.9" height="2" /><rect x="590.0" y="857.0" width="1.9" height="2" /><rect x="590.0" y="860.7" width="1.9" height="2" /></g>
<path d="M574.5,872.5 L585,883 M585,872.5 L574.5,883" stroke="#c8c8c8" stroke-width="2"/>
<path d="M572.5,916 L582,906.5" stroke="#b8b8b8" stroke-width="3" stroke-linecap="round"/><path d="M580,907 C578.5,903 581,899 586,899.5 L583,902.5 L585.5,905 L588.5,902 C589,907 585,909.5 581,908.5 Z" fill="#b8b8b8"/>
<rect x="603.5" y="924.5" width="19" height="14.5" fill="none" stroke="#8a8a8a" stroke-width="1"/><rect x="603.5" y="924.5" width="19" height="3" fill="#8a8a8a"/><path d="M605.5,930 L608.5,932.5 L605.5,935 M609,936 H613" fill="none" stroke="#8a8a8a" stroke-width="0.9"/><path d="M625.5,930 H634.5 L630,935 Z" fill="#7a7a7a"/>
<path d="M1335,935.5 H1345 L1340,930 Z" fill="#505050"/>
<path d="M175,958 L167,976 M257,958 L249,976 M306,958 L298,976" stroke="#5a6270" stroke-width="1.1"/>
<path d="M278,958.5 V974.5 M270,966.5 H286" stroke="#e0e0e0" stroke-width="2.2"/>
<path d="M1215.8,993 V1012 M1221.5,993 V1012 M1227.2,993 V1012 M1212,996.9 H1231 M1212,1002.4 H1231 M1212,1007.8 H1231" stroke="#e0e0e0" stroke-width="1.1"/>
<g fill="#e0e0e0"><rect x="1244.3" y="995.0" width="2.6" height="2.6"/><rect x="1244.3" y="1001.0" width="2.6" height="2.6"/><rect x="1244.3" y="1007.0" width="2.6" height="2.6"/><rect x="1250.1000000000001" y="995.0" width="2.6" height="2.6"/><rect x="1250.1000000000001" y="1001.0" width="2.6" height="2.6"/><rect x="1250.1000000000001" y="1007.0" width="2.6" height="2.6"/><rect x="1255.9" y="995.0" width="2.6" height="2.6"/><rect x="1255.9" y="1001.0" width="2.6" height="2.6"/><rect x="1255.9" y="1007.0" width="2.6" height="2.6"/></g>
<path d="M1271.9,999.9 H1281.9 L1276.9,1004.9 Z" fill="#e0e0e0"/>
<path d="M1299.5,995 V1004.5 M1294.8,999.8 H1304.2" stroke="#e0e0e0" stroke-width="1.1"/><rect x="1302.5" y="1004.5" width="12.5" height="5.5" fill="#d6d6d6" stroke="#9a9a9a" stroke-width="0.6"/>
<path d="M1326.5,993 V1012.5 H1342" fill="none" stroke="#e0e0e0" stroke-width="1.1"/><rect x="1326.5" y="1007" width="4.5" height="5.5" fill="none" stroke="#e0e0e0" stroke-width="1"/>
<circle cx="1363.8" cy="1003.2" r="7.8" fill="none" stroke="#e0e0e0" stroke-width="1.1"/><path d="M1363.5,1003.3 H1376.2 M1363.5,1003.3 L1373,994" stroke="#e0e0e0" stroke-width="1.1"/>
<path d="M1385.8,999.9 H1395.8 L1390.8,1004.9 Z" fill="#e0e0e0"/>
<path d="M1408,994 L1423.5,1009.5" stroke="#d25a5a" stroke-width="1.1"/><path d="M1416.6,993 V1011.5" stroke="#4ec27a" stroke-width="1.1"/><rect x="1414.6" y="1000.2" width="4" height="4" fill="#3b4453" stroke="#e0e0e0" stroke-width="0.9"/>
<path d="M1435.7,999.9 H1445.7 L1440.7,1004.9 Z" fill="#e0e0e0"/>
<path d="M1457.5,1009.8 H1477" stroke="#a8a8a8" stroke-width="1.6"/><path d="M1457.5,1009.5 L1472.2,995" stroke="#d0d0d0" stroke-width="1.1"/><rect x="1463.3" y="1001.5" width="3.6" height="3.6" fill="#d0d0d0"/>
<rect x="1489.4" y="995.2" width="17.2" height="17.2" fill="none" stroke="#ffffff" stroke-width="1.2"/><rect x="1487.5" y="993" width="5" height="5" fill="#5b8fc6" stroke="#ffffff" stroke-width="1.1"/>
<path d="M1517.0,999.9 H1527.0 L1522,1004.9 Z" fill="#e0e0e0"/>
<path d="M1549,993 L1552.5,1005 L1557.5,1013 L1549,1008 L1540.5,1013 L1545.5,1005 Z" fill="#ffffff"/><circle cx="1556.5" cy="997.5" r="3.3" fill="none" stroke="#ffffff" stroke-width="1"/>
<path d="M1579,993 L1582.5,1005 L1587.5,1013 L1579,1008 L1570.5,1013 L1575.5,1005 Z" fill="#d6d6d6"/><path d="M1588,994 L1584.5,999 H1587 L1585,1003 L1590,997.5 H1587.5 L1589.5,994 Z" fill="#d6d6d6"/>
<path d="M1609.5,993 L1613.0,1005 L1618.0,1013 L1609.5,1008 L1601.0,1013 L1606.0,1005 Z" fill="#d6d6d6"/>
<path d="M1652.0,999.9 H1662.0 L1657,1004.9 Z" fill="#e0e0e0"/>
<g transform="translate(1685,1003)" fill="#d6d6d6"><circle r="7.5"/><rect x="-2.2" y="-10.3" width="4.4" height="5" transform="rotate(0)"/><rect x="-2.2" y="-10.3" width="4.4" height="5" transform="rotate(45)"/><rect x="-2.2" y="-10.3" width="4.4" height="5" transform="rotate(90)"/><rect x="-2.2" y="-10.3" width="4.4" height="5" transform="rotate(135)"/><rect x="-2.2" y="-10.3" width="4.4" height="5" transform="rotate(180)"/><rect x="-2.2" y="-10.3" width="4.4" height="5" transform="rotate(225)"/><rect x="-2.2" y="-10.3" width="4.4" height="5" transform="rotate(270)"/><rect x="-2.2" y="-10.3" width="4.4" height="5" transform="rotate(315)"/></g><circle cx="1685" cy="1003" r="3" fill="#3b4453"/>
<path d="M1705.0,999.9 H1715.0 L1710,1004.9 Z" fill="#e0e0e0"/>
<path d="M1735.5,993.5 V1012.5 M1726,1003 H1745" stroke="#e6e6e6" stroke-width="2.6"/>
<rect x="1759.1" y="993.2" width="7.9" height="7.9" fill="none" stroke="#e0e0e0" stroke-width="1"/><circle cx="1774.5" cy="1001.6" r="4.3" fill="none" stroke="#e0e0e0" stroke-width="1"/><path d="M1766.5,1005.5 L1771,1012.8 H1762 Z" fill="none" stroke="#e0e0e0" stroke-width="1"/>
<path d="M1792,990 H1808 L1812,994 V1007 H1792 Z" fill="#3a6db0"/><path d="M1792,1004 H1802 L1800,1012 H1792 Z" fill="#f5b731"/><path d="M1797.5,990 V1004 M1792,996 H1806" stroke="#e8f0ff" stroke-width="1"/><path d="M1802,1008.5 L1806,1012.5 L1816.5,1003" fill="none" stroke="#4eb85a" stroke-width="2.6"/>
<path d="M1827,1001 H1834 L1836,1003 V1013 H1827 Z" fill="#eeeeee"/><path d="M1828,1003 H1835 V1009 H1828 Z" fill="#3a6db0"/><path d="M1828,1009 H1835 V1012 H1828 Z" fill="#f5b731"/><path d="M1831,994 C1834,987.5 1845,988 1845.5,998" fill="none" stroke="#d6d6d6" stroke-width="1.1"/><path d="M1829,993 L1833.5,993.5 L1831,997.5 Z" fill="#d6d6d6"/><path d="M1837.5,993.5 V1000 H1841" fill="none" stroke="#d6d6d6" stroke-width="1"/><circle cx="1841.5" cy="1008.5" r="4.6" fill="#5ab4ec"/><rect x="1841" y="1007" width="1.2" height="4" fill="#fff"/><circle cx="1841.6" cy="1005.5" r="0.7" fill="#fff"/>
<rect x="1864" y="995" width="19.7" height="14.5" fill="none" stroke="#d6d6d6" stroke-width="1.1"/><path d="M1874.5,1002 L1880,997.5 M1877,997.5 H1880 V1000.5 M1873,1002.5 L1867.5,1007 M1867.5,1004 V1007 H1870.5" fill="none" stroke="#d6d6d6" stroke-width="1"/>
<path d="M1894,994.5 H1914 M1894,1002.5 H1914 M1894,1010.2 H1914" stroke="#e6e6e6" stroke-width="2.5"/>
<rect x="948" y="43" width="19" height="9" fill="#f2f2f2" stroke="#ffffff" stroke-width="1"/><path d="M954.7,49.2 H960.3 L957.5,45.5 Z" fill="#666"/>
<path d="M971.9,45.4 H978.1 L975,49.4 Z" fill="#e0e0e0"/>
</svg>
</body></html>
